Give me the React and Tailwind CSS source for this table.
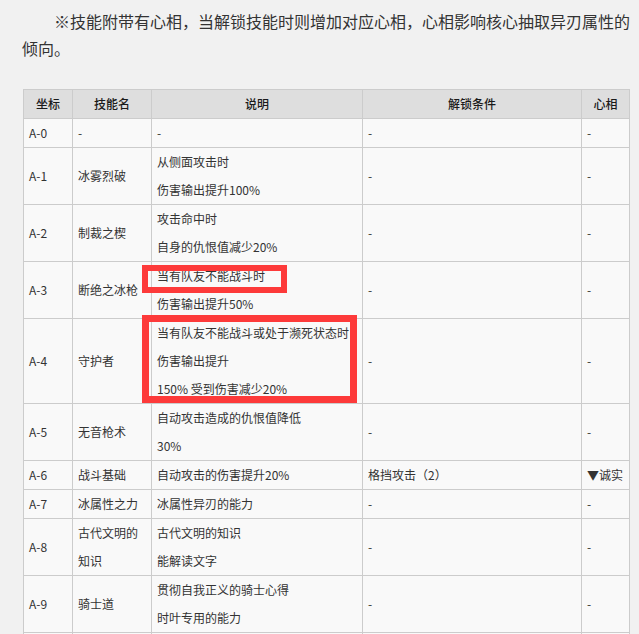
import React from "react";

const rows = [
  ["A-0", ["-"], ["-"], "-", "-"],
  ["A-1", ["冰雾烈破"], ["从侧面攻击时", "伤害输出提升100%"], "-", "-"],
  ["A-2", ["制裁之楔"], ["攻击命中时", "自身的仇恨值减少20%"], "-", "-"],
  ["A-3", ["断绝之冰枪"], ["当有队友不能战斗时", "伤害输出提升50%"], "-", "-"],
  ["A-4", ["守护者"], ["当有队友不能战斗或处于濒死状态时", "伤害输出提升", "150% 受到伤害减少20%"], "-", "-"],
  ["A-5", ["无音枪术"], ["自动攻击造成的仇恨值降低", "30%"], "-", "-"],
  ["A-6", ["战斗基础"], ["自动攻击的伤害提升20%"], "格挡攻击（2）", "▼诚实"],
  ["A-7", ["冰属性之力"], ["冰属性异刃的能力"], "-", "-"],
  ["A-8", ["古代文明的", "知识"], ["古代文明的知识", "能解读文字"], "-", "-"],
  ["A-9", ["骑士道"], ["贯彻自我正义的骑士心得", "时叶专用的能力"], "-", "-"],
];

const font = { fontFamily: '"Noto Sans CJK SC", "Noto Sans", sans-serif' };

export default function App() {
  const td = "border border-[#cccccc] px-[5px] py-0 align-middle text-left";
  const th = "border border-[#cccccc] px-[5px] py-0 text-center font-medium text-[#1a1a1a]";
  return (
    <div className="w-[639px] h-[634px] overflow-hidden bg-[#f1f1f1] text-[#333333]" style={font}>
      <p className="ml-[22px] w-[612px] pt-[8px] text-[16px] leading-[27px] indent-[32px] text-[#333333]">
        ※技能附带有心相，当解锁技能时则增加对应心相，心相影响核心抽取异刃属性的倾向。
      </p>
      <div className="relative ml-[23px] mt-[27px] w-[606px]">
        <table className="w-[606px] table-fixed border-collapse bg-[#f9f9f9] text-[12px] leading-[28px]">
          <colgroup>
            <col className="w-[49px]" />
            <col className="w-[79px]" />
            <col className="w-[211px]" />
            <col className="w-[219px]" />
            <col className="w-[48px]" />
          </colgroup>
          <thead>
            <tr className="bg-[#dedede]">
              <th className={th}>坐标</th>
              <th className={th}>技能名</th>
              <th className={th}>说明</th>
              <th className={th}>解锁条件</th>
              <th className={th}>心相</th>
            </tr>
          </thead>
          <tbody>
            {rows.map((r) => (
              <tr key={r[0]}>
                <td className={td}>{r[0]}</td>
                <td className={td}>
                  {r[1].map((l, i) => (
                    <div key={i}>{l}</div>
                  ))}
                </td>
                <td className={td}>
                  {r[2].map((l, i) => (
                    <div key={i}>{l}</div>
                  ))}
                </td>
                <td className={td}>{r[3]}</td>
                <td className={td + " whitespace-nowrap"}>{r[4]}</td>
              </tr>
            ))}
            <tr className="h-[28px]">
              <td className={td}></td>
              <td className={td}></td>
              <td className={td}></td>
              <td className={td}></td>
              <td className={td}></td>
            </tr>
          </tbody>
        </table>
        <div className="absolute left-[119px] top-[176px] w-[145px] h-[28px] border-[6px] border-[#fd3a3a]" />
        <div className="absolute left-[119px] top-[226px] w-[215px] h-[88px] border-[7px] border-[#fd3a3a]" />
      </div>
    </div>
  );
}
